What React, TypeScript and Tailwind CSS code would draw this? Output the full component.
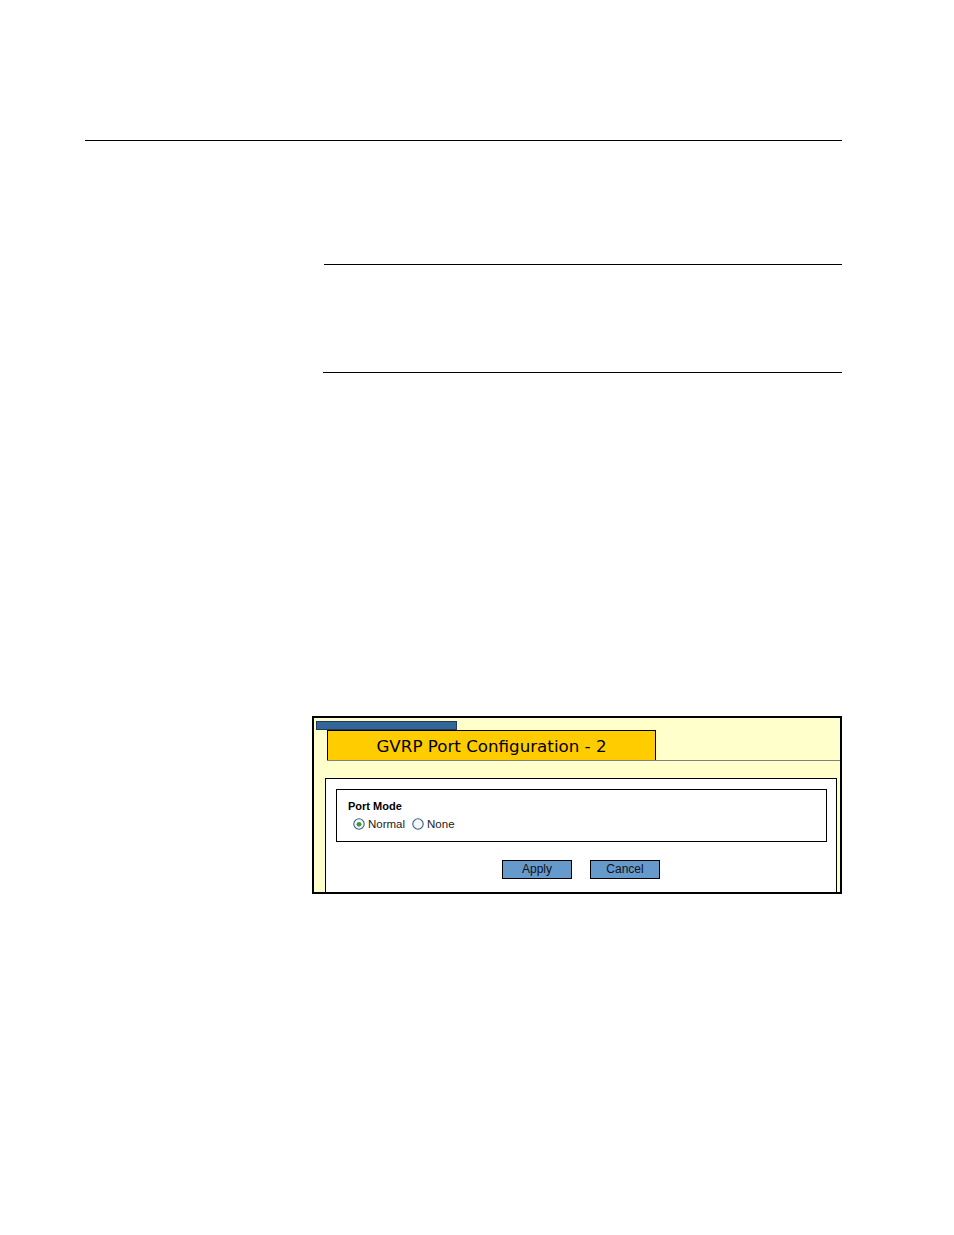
import React from "react";

function Radio({ checked }: { checked: boolean }) {
  return (
    <svg width="12" height="12" viewBox="0 0 12 12" className="shrink-0">
      <circle cx="6" cy="6" r="5.2" fill="#f4f6f8" stroke="#3a5f8a" strokeWidth="1.1" />
      {checked && <circle cx="6" cy="6.3" r="2.4" fill="#3c9a3c" />}
    </svg>
  );
}

export default function App() {
  return (
    <div className="w-[954px] h-[1235px] bg-white overflow-hidden" style={{ fontFamily: '"DejaVu Sans", Verdana, sans-serif' }}>
      {/* rules */}
      <div className="mt-[140px] ml-[85px] w-[757px] border-t border-black" />
      <div className="mt-[123px] ml-[324px] w-[518px] border-t border-black" />
      <div className="mt-[107px] ml-[323px] w-[519px] border-t border-black" />

      {/* screenshot panel */}
      <div className="mt-[343px] ml-[312px] w-[530px] h-[178px] border-2 border-black bg-[#ffffcc] flex flex-col">
        <div className="ml-[2px] mt-[3px] w-[141px] h-[9px] bg-[#336699] border border-[#1d3b5c]" />
        <div className="ml-[13px] flex border-b border-[#808080]">
          <div className="w-[329px] h-[30px] bg-[#ffcc00] border border-b-0 border-black flex items-center justify-center text-[16.7px] text-black pt-[3px]">
            GVRP Port Configuration - 2
          </div>
        </div>
        <div className="mt-[17px] ml-[11px] w-[512px] flex-1 bg-white border border-b-0 border-black flex flex-col" style={{ fontFamily: '"Liberation Sans", Arial, sans-serif' }}>
          <div className="mt-[10px] ml-[10px] w-[491px] h-[53px] border border-black pl-[11px] pt-[9px]">
            <div className="text-[11px] font-bold text-black leading-[14px]">Port Mode</div>
            <div className="flex items-center mt-[4px] ml-[5px] text-[11.5px] text-[#222] leading-[14px]">
              <Radio checked />
              <span className="ml-[3px]">Normal</span>
              <span className="ml-[7px]"><Radio checked={false} /></span>
              <span className="ml-[3px]">None</span>
            </div>
          </div>
          <div className="mt-[18px] flex justify-center gap-[18px]">
            <button className="w-[70px] h-[19px] bg-[#6699cc] border border-black text-[12px] text-[#111] leading-none pb-[1px]">Apply</button>
            <button className="w-[70px] h-[19px] bg-[#6699cc] border border-black text-[12px] text-[#111] leading-none pb-[1px]">Cancel</button>
          </div>
        </div>
      </div>
    </div>
  );
}
